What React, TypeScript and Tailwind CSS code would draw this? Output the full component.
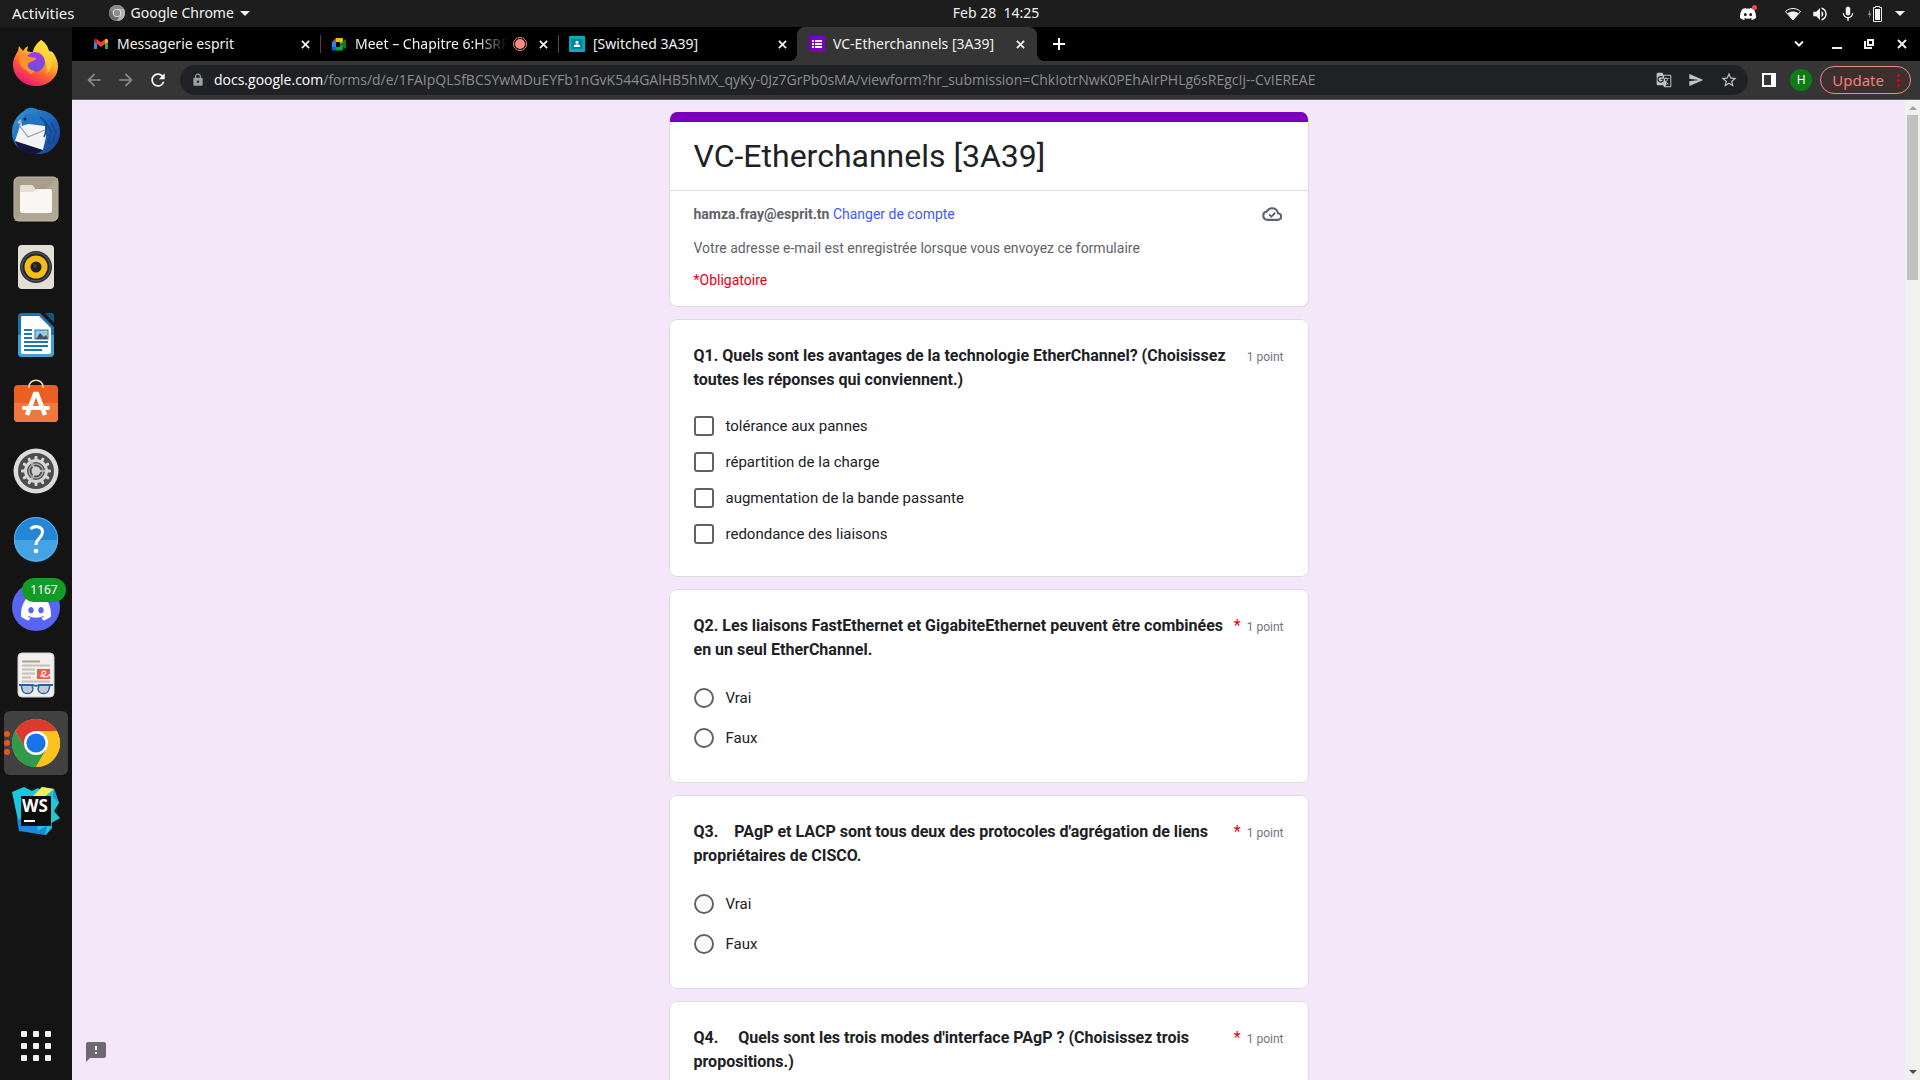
import React from 'react';
import {
  MdArrowBack,
  MdArrowForward,
  MdRefresh,
  MdLock,
  MdSend,
  MdStarBorder,
  MdFeedback,
  MdMic,
  MdVolumeUp,
  MdGTranslate,
} from 'react-icons/md';
import { SiDiscord } from 'react-icons/si';

/* ---------- small glyphs ---------- */

function CrossGlyph({ className }: { className: string }) {
  return (
    <svg viewBox="0 0 10 10" className={className} aria-hidden="true">
      <path d="M1 1l8 8M9 1L1 9" stroke="currentColor" strokeWidth="2" fill="none" />
    </svg>
  );
}

function CaretGlyph({ className }: { className: string }) {
  return (
    <svg viewBox="0 0 10 5" className={className} aria-hidden="true">
      <path d="M0 0h10L5 5z" fill="currentColor" />
    </svg>
  );
}

function ChromeMark({ className, mono = false }: { className: string; mono?: boolean }) {
  const c = mono
    ? ['#8a8a8a', '#6e6e6e', '#b5b5b5', '#ececec', '#8c8c8c']
    : ['#db3b2f', '#329a4d', '#fcc31e', '#ffffff', '#1a73e8'];
  return (
    <svg viewBox="0 0 48 48" className={className} aria-hidden="true">
      <circle cx="24" cy="24" r="24" fill={c[2]} />
      <path d="M3.2 12A24 24 0 0 1 44.8 12H24L13.6 30Z" fill={c[0]} />
      <path d="M3.2 12A24 24 0 0 0 24 48L34.4 30 24 36 13.6 30Z" fill={c[1]} />
      <path d="M24 12H44.8A24 24 0 0 1 24 48L34.4 30Z" fill={c[2]} />
      <circle cx="24" cy="24" r="12" fill={c[3]} />
      <circle cx="24" cy="24" r="9.6" fill={c[4]} />
    </svg>
  );
}

function GmailMark() {
  return (
    <svg viewBox="0 0 16 16" className="size-4" aria-hidden="true">
      <path d="M1 4v9h3V7z" fill="#4285f4" />
      <path d="M15 4v9h-3V7z" fill="#34a853" />
      <path d="M1 4.5C1 3 2.7 2.4 4 3.3V8L1 5.8z" fill="#c5221f" />
      <path d="M4 3.3l4 3 4-3V8l-4 3-4-3z" fill="#ea4335" />
      <path d="M15 4.5C15 3 13.3 2.4 12 3.3V8l3-2.200z" fill="#fbbc04" />
    </svg>
  );
}

function MeetMark() {
  return (
    <svg viewBox="0 0 16 16" className="size-4" aria-hidden="true">
      <path d="M1 6l4-4v4z" fill="#ea4335" />
      <path d="M5 2h6a1 1 0 0 1 1 1v4l-3 1V6H5z" fill="#fbbc04" />
      <path d="M1 6h4v5H1z" fill="#2684fc" />
      <path d="M1 11h4v3.500H2a1 1 0 0 1-1-1z" fill="#0066da" />
      <path d="M5 11h4V8l3 2v3.500a1 1 0 0 1-1 1H5z" fill="#00ac47" />
      <path d="M9 8l5-4.500c.5-.4 1-.2 1 .5v8c0 .7-.5 1-1 .5z" fill="#00832d" />
    </svg>
  );
}

function ClassroomMark() {
  return (
    <svg viewBox="0 0 16 16" className="size-4" aria-hidden="true">
      <rect width="16" height="16" rx="1" fill="#00acc1" />
      <rect x="2.5" y="3" width="11" height="10" fill="#00838f" />
      <circle cx="8" cy="6.3" r="1.5" fill="#fff" />
      <path d="M4.8 11V10c0-1 1.800-1.700 3.200-1.700s3.200.7 3.200 1.700v1z" fill="#fff" />
    </svg>
  );
}

function FormsMark() {
  return (
    <svg viewBox="0 0 16 16" className="size-4" aria-hidden="true">
      <rect width="16" height="16" rx="1" fill="#7b00c4" />
      <path d="M3 4h2v2H3zM3 7h2v2H3zM3 10h2v2H3zM6 4h7v2H6zM6 7h7v2H6zM6 10h7v2H6z" fill="#fff" />
    </svg>
  );
}

/* ---------- dock drawings, all on a 48 unit grid ---------- */

function FirefoxIcon() {
  return (
    <svg viewBox="0 0 48 48" className="size-12" aria-hidden="true">
      <defs>
        <linearGradient id="ffBody" x1="0.8" y1="0.1" x2="0.3" y2="1">
          <stop offset="0" stopColor="#fff04a" />
          <stop offset="0.35" stopColor="#ffb02c" />
          <stop offset="0.65" stopColor="#ff5a36" />
          <stop offset="1" stopColor="#e8127c" />
        </linearGradient>
        <radialGradient id="ffGlobe" cx="0.6" cy="0.2" r="0.9">
          <stop offset="0" stopColor="#a838e8" />
          <stop offset="1" stopColor="#5a55d8" />
        </radialGradient>
      </defs>
      <path
        d="M29 1c5 3 7 7 8 11 2 0 4 1 5 3 3 5 4 9 4 12 0 12-10 20-22 20S1 38 1 26c0-6 3-11 5-14l1-5 4 5c1-2 3-4 5-5l-1 5c2 1 4 1 6 1 1-5 4-8 8-12z"
        fill="url(#ffBody)"
      />
      <path d="M21 13c1-6 4-9 8-12 5 3 7 8 8 13 5 8 3 17-3 21 3-9-1-19-13-22z" fill="#ffd93a" opacity="0.7" />
      <circle cx="23" cy="23" r="10" fill="url(#ffGlobe)" />
      <path d="M7 19c4-5 8-2 11-1l6 1c0 3-6 3-8 6-1 3 2 6 6 7-9 2-15-5-15-13z" fill="#ff922e" />
      <path d="M14 26c1 3 4 6 9 6l-3 3c-4-1-7-4-6-9z" fill="#ff922e" />
    </svg>
  );
}

function ThunderbirdIcon() {
  return (
    <svg viewBox="0 0 48 48" className="size-12" aria-hidden="true">
      <defs>
        <linearGradient id="tbBody" x1="0" y1="0" x2="1" y2="1">
          <stop offset="0" stopColor="#2f9be0" />
          <stop offset="0.6" stopColor="#1c5cae" />
          <stop offset="1" stopColor="#1d3f98" />
        </linearGradient>
      </defs>
      <path d="M12 4C16-1 24 1 26 3c13 0 22 10 22 22S38 48 26 47C12 48 0 40 0 25 0 16 5 8 12 4z" fill="url(#tbBody)" />
      <path d="M3 33c8 3 20 6 29 9-5 5-11 6-16 5C9 45 5 40 3 33z" fill="#17143a" />
      <path d="M9 16l24 3 1 11-3 13L3 34z" fill="#f4f4f6" />
      <path d="M7 18l9 12 17-7" fill="none" stroke="#9c9ca8" strokeWidth="1.2" />
      <path d="M10 19c-2-6 2-12 8-12 8 1 14 5 17 12-8-4-16-3-25 0z" fill="#2077c6" />
      <path d="M9 12l-4 3 5 4z" fill="#a8bccd" />
      <circle cx="13" cy="12" r="1.500" fill="#101b3c" />
      <path d="M28 10c7 5 7 13 4 20M33 14l6 10-3 14M39 15l5 11-4 11" fill="none" stroke="#0f4a94" strokeWidth="1.5" />
    </svg>
  );
}

function FilesIcon() {
  return (
    <svg viewBox="0 0 48 48" className="size-12" aria-hidden="true">
      <rect x="2" y="2" width="44" height="44" rx="5" fill="#a79f8c" stroke="#c0b9a8" />
      <path d="M2 46 46 2v39a5 5 0 0 1-5 5z" fill="#b5ad9b" opacity="0.6" />
      <path d="M8 12c0-2 1-2 2-2h10l3 3v5H8z" fill="#e4e0d4" />
      <path d="M8 17h13l3-3h14a2 2 0 0 1 2 2v20a2 2 0 0 1-2 2H10a2 2 0 0 1-2-2z" fill="#f8f7f4" />
    </svg>
  );
}

function RhythmboxIcon() {
  return (
    <svg viewBox="0 0 48 48" className="size-12" aria-hidden="true">
      <rect x="6" y="2" width="36" height="44" rx="4" fill="#e4dfd4" />
      <circle cx="24" cy="24" r="16" fill="#34363f" />
      <circle cx="24" cy="24" r="14" fill="#20222b" stroke="#565a6b" />
      <circle cx="24" cy="24" r="11.5" fill="#f5bd17" />
      <circle cx="24" cy="24" r="5.5" fill="#202020" />
      <circle cx="23" cy="23" r="2" fill="#3b3b3b" />
    </svg>
  );
}

function WriterIcon() {
  return (
    <svg viewBox="0 0 48 48" className="size-12" aria-hidden="true">
      <path d="M10 2h18l14 14v26a4 4 0 0 1-4 4H10a4 4 0 0 1-4-4V6a4 4 0 0 1 4-4z" fill="#1a73ac" />
      <path d="M6 24h36v18a4 4 0 0 1-4 4H10a4 4 0 0 1-4-4z" fill="#45a0d4" />
      <path d="M10 5h17l12 12v24a2 2 0 0 1-2 2H11a2 2 0 0 1-2-2V6z" fill="#fff" />
      <path d="M33 2h7a2 2 0 0 1 2 2v8z" fill="#12557f" />
      <path d="M12 19h8M12 23h8M12 27h8M12 31h24M12 35h24M12 39h18" stroke="#1a78b4" strokeWidth="2" />
      <rect x="23" y="19" width="13" height="9" fill="#8ccdf0" stroke="#1a78b4" />
      <path d="M24 28l4-6 4 4 2-2 2 4z" fill="#485055" />
      <circle cx="34" cy="21" r="1.5" fill="#f5c52c" />
    </svg>
  );
}

function SoftwareIcon() {
  return (
    <svg viewBox="0 0 48 48" className="size-12" aria-hidden="true">
      <rect x="2" y="6" width="44" height="37" rx="4" fill="#ea5f24" />
      <path d="M2 24h44v15a4 4 0 0 1-4 4H6a4 4 0 0 1-4-4z" fill="#f0783e" />
      <path d="M17 9V8c0-9 14-9 14 0v1" fill="none" stroke="#f4dfb0" strokeWidth="1.500" />
      <path d="M15 36l8-21h2l8 21" fill="none" stroke="#fff" strokeWidth="4.500" />
      <path d="M12 29h24" stroke="#fff" strokeWidth="4" strokeLinecap="round" />
    </svg>
  );
}

function SettingsIcon() {
  const teeth = [0, 30, 60, 90, 120, 150, 180, 210, 240, 270, 300, 330];
  return (
    <svg viewBox="0 0 48 48" className="size-12" aria-hidden="true">
      <circle cx="24" cy="24" r="22.5" fill="#dcdcdc" />
      <circle cx="24" cy="24" r="18" fill="#4c4c4c" />
      {teeth.map((a) => (
        <rect key={a} x="22.5" y="9" width="3" height="5" rx="1" fill="#d6d6d6" transform={`rotate(${a} 24 24)`} />
      ))}
      <circle cx="24" cy="24" r="10.5" fill="none" stroke="#d6d6d6" strokeWidth="3" />
      <path d="M24 24H34M24 24l-5-9M24 24l-5 9" stroke="#bdbdbd" strokeWidth="2" />
      <circle cx="24" cy="24" r="7" fill="none" stroke="#a6a6a6" strokeWidth="1.5" />
      <circle cx="24" cy="24" r="4.5" fill="#d0d0d0" />
    </svg>
  );
}

function HelpIcon() {
  return (
    <svg viewBox="0 0 48 48" className="size-12" aria-hidden="true">
      <circle cx="24" cy="24" r="22" fill="#2486d6" />
      <path d="M2 25h44a22 22 0 0 1-44 0z" fill="#45a3e4" />
      <circle cx="24" cy="24" r="21.5" fill="none" stroke="#5db0ea" />
      <path d="M18.5 14c3-3.500 12-3.500 12 3 0 6-6.500 6-6.500 13" fill="none" stroke="#fff" strokeWidth="3" />
      <circle cx="24" cy="36" r="2.300" fill="#fff" />
    </svg>
  );
}

function DiscordIcon() {
  return (
    <span className="flex size-12 items-center justify-center rounded-full bg-[#5865f2]">
      <SiDiscord className="mt-1 size-[30px] text-white" />
    </span>
  );
}

function DocViewerIcon() {
  return (
    <svg viewBox="0 0 48 48" className="size-12" aria-hidden="true">
      <rect x="6" y="2" width="36" height="44" rx="4" fill="#f1f0ee" stroke="#d0cfcc" />
      <path d="M10 10.500h18" stroke="#a9a496" strokeWidth="2" />
      <path d="M10 14.500h28M10 18.500h13M10 22.500h13M10 26.500h9M10 30.500h28" stroke="#c5c1b5" strokeWidth="1.800" />
      <rect x="25" y="18" width="13" height="10" fill="#f05a4f" />
      <path d="M28 25c6 0 7-5 4-5s-3 6 1 6 4-2 5-3" fill="none" stroke="#fff" strokeWidth="1.2" />
      <path d="M9 34h11l1 4c-1 6-10 6-11 0zM27 34h11l-1 4c-1 6-10 6-11 0z" fill="#c3ccd6" stroke="#2463a8" strokeWidth="1.500" />
      <path d="M7 34h14q3 1.500 6 0h14" stroke="#2463a8" strokeWidth="1.8" fill="none" />
    </svg>
  );
}

function WebStormIcon() {
  return (
    <svg viewBox="0 0 48 48" className="size-12" aria-hidden="true">
      <path d="M0 5l12-5 8 4 6-3 12 10 2 30-6 7-26-5z" fill="#18c8dc" />
      <path d="M5 32l32-2-4 18-26-4z" fill="#1f86d8" />
      <path d="M20 10L30 0l12 2 5 14-5 8 6 7-22 13z" fill="#22c6d4" />
      <path d="M20 10L30 0l12 2-10 8z" fill="#f6ee56" />
      <path d="M42 2l5 14-6-6z" fill="#2596dc" />
      <rect x="9" y="9" width="30" height="30" fill="#0c0c0c" />
      <path d="M12 33h11v2H12z" fill="#fff" />
      <text x="10" y="25" fontFamily="Open Sans, sans-serif" fontWeight="700" fontSize="17" fill="#fff">
        WS
      </text>
    </svg>
  );
}

const dockApps = [
  { name: 'Firefox', icon: <FirefoxIcon /> },
  { name: 'Thunderbird', icon: <ThunderbirdIcon /> },
  { name: 'Files', icon: <FilesIcon /> },
  { name: 'Rhythmbox', icon: <RhythmboxIcon /> },
  { name: 'LibreOffice Writer', icon: <WriterIcon /> },
  { name: 'Ubuntu Software', icon: <SoftwareIcon /> },
  { name: 'Settings', icon: <SettingsIcon /> },
  { name: 'Help', icon: <HelpIcon /> },
  { name: 'Discord', icon: <DiscordIcon />, badge: '1167' },
  { name: 'Document Viewer', icon: <DocViewerIcon /> },
  { name: 'Google Chrome', icon: <ChromeMark className="size-12" />, active: true },
  { name: 'WebStorm', icon: <WebStormIcon /> },
];

function Dock() {
  return (
    <nav aria-label="Dock" className="flex w-[72px] shrink-0 flex-col items-center gap-1 bg-[#141414] pt-1">
      {dockApps.map((app) => (
        <button
          key={app.name}
          aria-label={app.name}
          className={
            app.active
              ? 'relative flex size-16 shrink-0 items-center justify-center rounded-md bg-[#414141]'
              : 'relative flex size-16 shrink-0 items-center justify-center'
          }
        >
          {app.icon}
          {app.badge && (
            <span className="absolute top-[3px] left-[18px] flex h-6 w-11 items-center justify-center rounded-full bg-[#119c25] text-xs text-white">
              {app.badge}
            </span>
          )}
          {app.active && (
            <span className="absolute top-5 left-0 flex flex-col gap-[3px]">
              <span className="size-1.5 rounded-full bg-[#e95420]" />
              <span className="size-1.5 rounded-full bg-[#e95420]" />
              <span className="size-1.5 rounded-full bg-[#e95420]" />
            </span>
          )}
        </button>
      ))}
      <button aria-label="Show applications" className="mt-auto mb-[19px] grid grid-cols-3 gap-1.5">
        {[0, 1, 2, 3, 4, 5, 6, 7, 8].map((n) => (
          <span key={n} className="size-1.5 rounded-[1px] bg-[#f0f0f0]" />
        ))}
      </button>
    </nav>
  );
}

/* ---------- desktop top bar ---------- */

function TopBar() {
  return (
    <header className="flex h-[27px] shrink-0 items-center bg-[#1d1d1d] pr-[11px] pl-3 text-sm text-[#f2f2f2]">
      <div className="flex flex-1 items-center">
        <button className="text-[15px]">Activities</button>
        <button className="ml-[34px] flex items-center">
          <ChromeMark className="mr-1.5 size-4" mono />
          Google Chrome
          <CaretGlyph className="ml-1.5 h-[5px] w-2.5" />
        </button>
      </div>
      <button className="mb-px pl-[71px] whitespace-pre">Feb 28  14:25</button>
      <div className="flex flex-1 items-center justify-end">
        <span className="relative mr-[29px]">
          <SiDiscord className="size-4 text-white" />
          <span className="absolute -top-px -right-px size-[5px] rounded-full bg-[#f04747]" />
        </span>
        <svg viewBox="0 0 16 14" className="mr-2.5 h-3.5 w-4" aria-hidden="true">
          <path d="M.5 4.500C4.500.5 11.500.5 15.500 4.500L8 13z" fill="none" stroke="#f2f2f2" />
          <path d="M2.500 6.500c3-2.600 8-2.600 11 0L8 13z" fill="#f2f2f2" />
        </svg>
        <MdVolumeUp className="mr-2.5 size-[18px]" />
        <MdMic className="mr-2.5 size-[18px]" />
        <svg viewBox="0 0 16 16" className="mr-3 size-4" aria-hidden="true">
          <path d="M3 3.500L1 9h1.500L2 12.500 4.500 7.500H3z" fill="#8a8a8a" />
          <path d="M8.500 1.500V.5h4v1h2v14h-8v-14z" fill="none" stroke="#f2f2f2" />
          <path d="M8 3h5v11H8z" fill="#f2f2f2" />
        </svg>
        <CaretGlyph className="mr-1 h-[5px] w-2.5" />
      </div>
    </header>
  );
}

/* ---------- browser chrome ---------- */

type TabProps = { icon: React.ReactNode; title: string; recording?: boolean; divider?: boolean };

function BackgroundTab({ icon, title, recording, divider }: TabProps) {
  return (
    <div
      className={
        divider
          ? 'my-2 flex w-[238px] shrink-0 items-center border-r border-[#4a4a4a] px-2.5'
          : 'my-2 flex w-[238px] shrink-0 items-center px-2.5'
      }
    >
      {icon}
      <a
        href="#"
        className={
          recording
            ? 'ml-2 min-w-0 flex-1 overflow-hidden whitespace-nowrap mask-r-from-80%'
            : 'ml-2 min-w-0 flex-1 overflow-hidden whitespace-nowrap'
        }
      >
        {title}
      </a>
      {recording && (
        <span className="mr-3 ml-1.5 flex size-3.5 shrink-0 items-center justify-center rounded-full border border-[#f28b82]">
          <span className="size-2.5 rounded-full bg-[#f28b82]" />
        </span>
      )}
      <button aria-label={`Close ${title}`}>
        <CrossGlyph className="size-[9px]" />
      </button>
    </div>
  );
}

function TabStrip() {
  return (
    <div className="flex h-[34px] shrink-0 bg-black pl-[11px] text-sm text-[#f1f1f1]">
      <BackgroundTab icon={<GmailMark />} title="Messagerie esprit" divider />
      <BackgroundTab icon={<MeetMark />} title="Meet – Chapitre 6:HSRP" recording divider />
      <BackgroundTab icon={<ClassroomMark />} title="[Switched 3A39]" />
      <div className="relative flex w-60 shrink-0 items-center rounded-t-lg bg-[#353535] px-3">
        <span className="absolute bottom-0 -left-2 size-2 bg-[radial-gradient(circle_at_top_left,transparent_8px,#353535_8px)]" />
        <span className="absolute -right-2 bottom-0 size-2 bg-[radial-gradient(circle_at_top_right,transparent_8px,#353535_8px)]" />
        <FormsMark />
        <a href="#" className="ml-2 min-w-0 flex-1 overflow-hidden whitespace-nowrap">
          VC-Etherchannels [3A39]
        </a>
        <button aria-label="Close VC-Etherchannels [3A39]">
          <CrossGlyph className="size-[9px]" />
        </button>
      </div>
      <button aria-label="New tab" className="ml-4">
        <svg viewBox="0 0 12 12" className="size-3" aria-hidden="true">
          <path d="M6 0v12M0 6h12" stroke="#fff" strokeWidth="2" />
        </svg>
      </button>
      <div className="ml-auto flex items-center pr-[13px]">
        <button aria-label="Search tabs" className="mr-7">
          <svg viewBox="0 0 10 6" className="h-1.5 w-2.5" aria-hidden="true">
            <path d="M1 .5l4 4 4-4" stroke="#f1f1f1" strokeWidth="2" fill="none" />
          </svg>
        </button>
        <button aria-label="Minimize" className="mt-2 mr-[22px] h-0.5 w-2.5 bg-[#f1f1f1]" />
        <button aria-label="Restore" className="mr-[23px]">
          <svg viewBox="0 0 10 10" className="size-2.5" aria-hidden="true">
            <path d="M4 1h5v5H4zM1 2v7h7" fill="none" stroke="#f1f1f1" strokeWidth="2" />
          </svg>
        </button>
        <button aria-label="Close window">
          <CrossGlyph className="size-2.5" />
        </button>
      </div>
    </div>
  );
}

function Toolbar() {
  return (
    <div className="flex h-[39px] shrink-0 items-center border-b border-[#5c5c5c] bg-[#353535] pr-[9px] pl-3">
      <button aria-label="Back" className="mr-3 text-[#8b8b8b]">
        <MdArrowBack className="size-5" />
      </button>
      <button aria-label="Forward" className="mr-3 text-[#8b8b8b]">
        <MdArrowForward className="size-5" />
      </button>
      <button aria-label="Reload" className="mr-3 text-white">
        <MdRefresh className="size-5" />
      </button>
      <div className="mr-3.5 flex h-[30px] min-w-0 flex-1 items-center rounded-full bg-[#202124] pr-2.5 pl-[11px] text-sm text-[#9aa0a6]">
        <MdLock className="mr-[9px] size-3.5 shrink-0" />
        <p className="min-w-0 flex-1 overflow-hidden font-['Open_Sans',sans-serif] whitespace-nowrap text-[#8b8d90]">
          <span className="text-white">docs.google.com</span>
          /forms/d/e/1FAIpQLSfBCSYwMDuEYFb1nGvK544GAlHB5hMX_qyKy-0Jz7GrPb0sMA/viewform?hr_submission=ChkIotrNwK0PEhAIrPHLg6sREgcIj--CvIEREAE
        </p>
        <button aria-label="Translate" className="mr-4 text-[#c4c4c4]">
          <MdGTranslate className="size-4" />
        </button>
        <button aria-label="Share" className="mr-4 text-[#c4c4c4]">
          <MdSend className="size-4" />
        </button>
        <button aria-label="Bookmark" className="text-[#c4c4c4]">
          <MdStarBorder className="size-[18px]" />
        </button>
      </div>
      <button aria-label="Side panel" className="mr-3.5 flex h-3.5 w-3.5 border-2 border-r-[5px] border-white" />
      <button
        aria-label="Profile H"
        className="mr-2 flex size-[22px] items-center justify-center rounded-full bg-[#0f7b16] text-xs text-white"
      >
        H
      </button>
      <button className="flex h-7 items-center rounded-full border border-[#f28b82] bg-[#3d2f2f] pr-2 pl-[11px] text-[15px] text-[#ef8079]">
        Update
        <span className="ml-[11px] flex flex-col items-center gap-0.5 px-0.5">
          <span className="size-[3px] rounded-full bg-[#e8000c]" />
          <span className="size-[3px] rounded-full bg-[#e8000c]" />
          <span className="size-[3px] rounded-full bg-[#e8000c]" />
        </span>
      </button>
    </div>
  );
}

/* ---------- the form ---------- */

type Question = {
  id: string;
  text: string;
  required: boolean;
  kind: 'checkbox' | 'radio';
  options: string[];
};

const questions: Question[] = [
  {
    id: 'q1',
    text: 'Q1. Quels sont les avantages de la technologie EtherChannel? (Choisissez toutes les réponses qui conviennent.)',
    required: false,
    kind: 'checkbox',
    options: [
      'tolérance aux pannes',
      'répartition de la charge',
      'augmentation de la bande passante',
      'redondance des liaisons',
    ],
  },
  {
    id: 'q2',
    text: 'Q2. Les liaisons FastEthernet et GigabiteEthernet peuvent être combinées en un seul EtherChannel.',
    required: true,
    kind: 'radio',
    options: ['Vrai', 'Faux'],
  },
  {
    id: 'q3',
    text: "Q3.    PAgP et LACP sont tous deux des protocoles d'agrégation de liens propriétaires de CISCO.",
    required: true,
    kind: 'radio',
    options: ['Vrai', 'Faux'],
  },
  {
    id: 'q4',
    text: "Q4.     Quels sont les trois modes d'interface PAgP ? (Choisissez trois propositions.)",
    required: true,
    kind: 'checkbox',
    options: [],
  },
];

function QuestionCard({ q }: { q: Question }) {
  return (
    <fieldset
      aria-labelledby={`${q.id}-title`}
      className="shrink-0 rounded-lg border border-[#dadce0] bg-white p-6"
    >
      <div className="flex">
        <h2 id={`${q.id}-title`} className="flex-1 text-base leading-6 font-bold whitespace-pre-wrap text-[#202124]">
          {q.text}
        </h2>
        <span className="w-3.5 shrink-0 text-right text-base leading-6 text-[#e60012]">{q.required ? '*' : ''}</span>
        <span className="ml-1.5 shrink-0 text-xs leading-[26px] text-[#70757a]">1 point</span>
      </div>
      <div className={q.kind === 'checkbox' ? 'flex flex-col gap-4 pt-6 pb-2' : 'flex flex-col gap-5 pt-[26px] pb-2.5'}>
        {q.options.map((option) => (
          <label key={option} className="flex h-5 items-center gap-3 text-[15px] text-[#202124]">
            <input
              type={q.kind}
              name={q.id}
              className={
                q.kind === 'checkbox'
                  ? 'size-5 appearance-none rounded-[3px] border-2 border-[#5f6368]'
                  : 'size-5 appearance-none rounded-full border-2 border-[#5f6368]'
              }
            />
            {option}
          </label>
        ))}
      </div>
    </fieldset>
  );
}

function FormPage() {
  return (
    <main className="relative flex min-h-0 flex-1 bg-[#f3e7f9] font-['Roboto',sans-serif]">
      <div className="flex min-w-0 flex-1 flex-col items-center overflow-hidden">
        <form className="flex w-[640px] flex-col gap-3 pt-3">
          <section className="shrink-0 overflow-hidden rounded-lg border border-t-0 border-[#dadce0] bg-white">
            <div className="h-2.5 bg-[#7b00bd]" />
            <h1 className="border-b border-[#dadce0] px-6 py-3.5 text-[32px] leading-10 text-[#202124]">
              VC-Etherchannels [3A39]
            </h1>
            <div className="px-6 pt-[13px] pb-4 text-sm leading-5 text-[#5f6368]">
              <div className="flex items-center justify-between">
                <p>
                  <span className="font-bold">hamza.fray@esprit.tn</span>{' '}
                  <a href="#" className="text-[#3d5afe]">
                    Changer de compte
                  </a>
                </p>
                <svg viewBox="0 0 24 24" className="mr-0.5 size-5" aria-label="Enregistré">
                  <path
                    d="M6.500 19h12.300a4 4 0 0 0 .4-8C18.500 7.600 15.600 5 12 5 9.200 5 6.900 6.600 5.800 9A5.030 5.030 0 0 0 6.500 19z"
                    fill="none"
                    stroke="currentColor"
                    strokeWidth="2.500"
                  />
                  <path d="M8.500 12.500l2.700 2.700 4.600-4.700" fill="none" stroke="currentColor" strokeWidth="2.200" />
                </svg>
              </div>
              <p className="mt-3.5">Votre adresse e-mail est enregistrée lorsque vous envoyez ce formulaire</p>
              <p className="mt-3 text-[#e60012]">*Obligatoire</p>
            </div>
          </section>
          {questions.map((q) => (
            <QuestionCard key={q.id} q={q} />
          ))}
        </form>
      </div>
      <button aria-label="Report a problem" className="absolute bottom-4 left-3 text-[#6f6974]">
        <MdFeedback className="size-6" />
      </button>
      <div className="flex w-[15px] shrink-0 flex-col items-center bg-[#f1f1f1] py-1.5">
        <svg viewBox="0 0 8 4" className="h-1 w-2" aria-hidden="true">
          <path d="M0 4h8L4 0z" fill="#a3a3a3" />
        </svg>
        <div className="mt-[5px] h-[165px] w-[11px] bg-[#c1c1c1]" />
        <svg viewBox="0 0 8 4" className="mt-auto h-1 w-2" aria-hidden="true">
          <path d="M0 0h8L4 4z" fill="#505050" />
        </svg>
      </div>
    </main>
  );
}

export default function App() {
  return (
    <div className="flex h-screen flex-col overflow-hidden font-['Noto_Sans',sans-serif]">
      <TopBar />
      <div className="flex min-h-0 flex-1">
        <Dock />
        <div className="flex min-w-0 flex-1 flex-col">
          <TabStrip />
          <Toolbar />
          <FormPage />
        </div>
      </div>
    </div>
  );
}
